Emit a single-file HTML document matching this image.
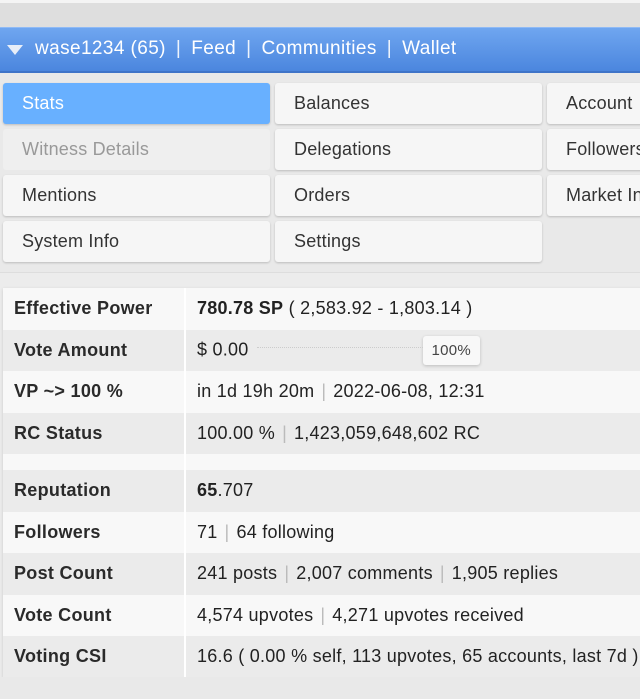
<!DOCTYPE html>
<html><head><meta charset="utf-8"><style>
*{margin:0;padding:0;box-sizing:border-box}
body{width:640px;height:699px;overflow:hidden;background:#ececec;font-family:"Liberation Sans",sans-serif;position:relative}
.top{position:absolute;left:0;top:0;width:640px;height:27px;background:#dedede;border-top:3px solid #f4f4f4}
.bar{position:absolute;left:0;top:27px;width:640px;height:46px;background:linear-gradient(#6fa6f0,#4b86de);border-top:1px solid #8fbaf5;border-bottom:2px solid #3f74c8;color:#fff;font-size:19px;letter-spacing:0.4px;line-height:42px;padding-left:35px;white-space:nowrap}
.bar .sep{margin:0 10px;opacity:.9;font-weight:normal}
.tri{position:absolute;left:7px;top:17px;width:0;height:0;border-left:8px solid transparent;border-right:8px solid transparent;border-top:10px solid #e8eef8}
.btn{position:absolute;height:41px;background:#f6f6f6;border-radius:3px;box-shadow:0 1px 2px rgba(0,0,0,.2);font-size:18px;color:#333;line-height:41px;padding-left:19px;white-space:nowrap;overflow:hidden;letter-spacing:0.2px}
.grid{position:absolute;left:0;top:73px;width:640px;height:200px;background:#e9e9e9;border-bottom:1px solid #ddd}
table{position:absolute;left:3px;top:288px;width:640px;border-collapse:collapse;font-size:18px;letter-spacing:0.25px;color:#222;box-shadow:0 1px 3px rgba(0,0,0,.15)}
td{height:41.5px;padding-left:11px;white-space:nowrap}
td:first-child{width:182px;font-weight:bold;color:#2a2a2a;border-right:2px solid #fff;letter-spacing:0.3px}
tr.g td{background:#ebebeb}
tr.w td{background:#f8f8f8}
tr.sp td{height:16px;background:#f8f8f8}
.p{color:#bbb;margin:0 7px}
.pill{display:inline-block;vertical-align:middle;margin-left:8px;width:166px;height:2px;border-top:1px dotted #ccc;position:relative;top:-2px}
.pct{display:inline-block;vertical-align:middle;background:#f8f8f8;border-radius:3px;box-shadow:0 1px 3px rgba(0,0,0,.2);font-size:15px;padding:6px 9px;color:#444;margin-left:0}
.bottom{position:absolute;left:0;top:677px;width:640px;height:22px;background:#e9e9e9}
</style></head><body>
<div class="top"></div>
<div class="bar"><div class="tri"></div>wase1234 (65)<span class="sep">|</span>Feed<span class="sep">|</span>Communities<span class="sep">|</span>Wallet</div>
<div class="grid"></div>
<div class="btn" style="left:3px;top:83px;width:267px;background:#68b0ff;color:#fff">Stats</div>
<div class="btn" style="left:275px;top:83px;width:267px">Balances</div>
<div class="btn" style="left:547px;top:83px;width:100px">Account</div>
<div class="btn" style="left:3px;top:129px;width:267px;background:#efefef;color:#999;box-shadow:none">Witness Details</div>
<div class="btn" style="left:275px;top:129px;width:267px">Delegations</div>
<div class="btn" style="left:547px;top:129px;width:100px">Followers</div>
<div class="btn" style="left:3px;top:175px;width:267px">Mentions</div>
<div class="btn" style="left:275px;top:175px;width:267px">Orders</div>
<div class="btn" style="left:547px;top:175px;width:100px">Market Info</div>
<div class="btn" style="left:3px;top:221px;width:267px">System Info</div>
<div class="btn" style="left:275px;top:221px;width:267px">Settings</div>
<table>
<tr class="w"><td>Effective Power</td><td><b>780.78 SP</b> ( 2,583.92 - 1,803.14 )</td></tr>
<tr class="g"><td>Vote Amount</td><td>$ 0.00<span class="pill"></span><span class="pct">100%</span></td></tr>
<tr class="w"><td>VP ~&gt; 100 %</td><td>in 1d 19h 20m<span class="p">|</span>2022-06-08, 12:31</td></tr>
<tr class="g"><td>RC Status</td><td>100.00 %<span class="p">|</span>1,423,059,648,602 RC</td></tr>
<tr class="sp"><td></td><td></td></tr>
<tr class="g"><td>Reputation</td><td><b>65</b>.707</td></tr>
<tr class="w"><td>Followers</td><td>71<span class="p">|</span>64 following</td></tr>
<tr class="g"><td>Post Count</td><td>241 posts<span class="p">|</span>2,007 comments<span class="p">|</span>1,905 replies</td></tr>
<tr class="w"><td>Vote Count</td><td>4,574 upvotes<span class="p">|</span>4,271 upvotes received</td></tr>
<tr class="g"><td>Voting CSI</td><td>16.6 ( 0.00 % self, 113 upvotes, 65 accounts, last 7d )</td></tr>
</table>
<div class="bottom"></div>
</body></html>
